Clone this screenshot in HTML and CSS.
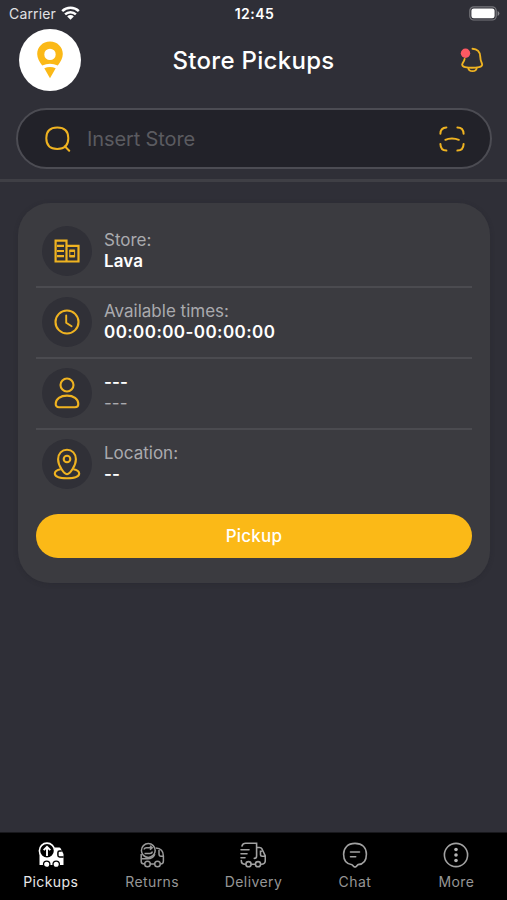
FILE: index.html
```html
<!DOCTYPE html>
<html lang="en">
<head>
<meta charset="utf-8">
<meta name="viewport" content="width=device-width, initial-scale=1">
<title>Store Pickups</title>
<link rel="stylesheet" href="styles.css">
</head>
<body>
<div class="app">
  <div class="status">
    <div class="carrier"><span>Carrier</span>
      <svg width="19" height="14" viewBox="0 0 19 14"><g fill="none" stroke="#fff" stroke-width="2.5"><path d="M1.2 5.1a12 12 0 0 1 16.6 0"/><path d="M4.1 8.3a7.8 7.8 0 0 1 10.8 0"/></g><path d="M9.5 13.8 6.2 10.4a4.7 4.7 0 0 1 6.6 0Z" fill="#fff"/></svg>
    </div>
    <time class="clock">12:45</time>
    <svg class="battery" width="31" height="15" viewBox="0 0 31 15"><rect x=".8" y=".8" width="26.4" height="13.2" rx="4" fill="none" stroke="#77777c" stroke-width="1.2"/><rect x="2.4" y="2.5" width="23.2" height="9.8" rx="2.3" fill="#fff"/><path d="M28.6 5v5q1.8-.8 1.8-2.5T28.6 5Z" fill="#85858a"/></svg>
  </div>
  <header class="header">
    <div class="logo"><svg width="28" height="40" viewBox="0 0 28 40"><path fill="#fbb917" fill-rule="evenodd" d="M14 1.500C6.700 1.500 1.200 7 1.200 14c0 4 2.300 8.200 5 11.500q7.800-3.500 15.600 0C24.500 22.200 26.800 18 26.800 14c0-7-5.500-12.500-12.800-12.500Zm0 7.200a5.700 5.700 0 1 0 0 11.400 5.700 5.700 0 0 0 0-11.400Z"/><path fill="#fbb917" d="M8.300 28.300q5.700-2.600 11.400 0L14 38.300Z"/></svg></div>
    <h1 class="title">Store Pickups</h1>
    <svg class="bell" width="24" height="26" viewBox="0 0 24 26"><g fill="none" stroke="#efb321" stroke-width="1.9" stroke-linecap="round" stroke-linejoin="round"><path d="M12.500 1.700c4.800 0 7.600 3.500 7.700 7.600.1 4.100.5 4.900 1.700 7.200 1 2.100-.7 3.200-2.800 3.600-4.800.9-9.600.9-14 0-2-.4-3.700-1.700-2.600-3.600 1.200-1.900 1.900-2.900 2.100-4.500"/><path d="M8.300 21c.5 4.200 7.900 4.200 8.400 0"/></g><circle cx="5.500" cy="6.300" r="4.700" fill="#fd5963"/></svg>
  </header>
  <div class="search">
    <svg width="26" height="26" viewBox="0 0 26 26" fill="none" stroke="#efb321" stroke-width="2" stroke-linecap="round"><path d="M12.300 1.500c7.300 0 11 3.500 11 10.700s-3.700 10.700-11 10.700-11-3.500-11-10.700 3.700-10.700 11-10.700Z"/><path d="m19.800 20.200 4.400 4.600"/></svg>
    <span class="placeholder">Insert Store</span>
    <svg width="26" height="26" viewBox="0 0 26 26" fill="none" stroke="#efb321" stroke-width="2" stroke-linecap="round"><path d="M1.400 7.800c0-4.200 2.200-6.300 6-6.400M18.400 1.400c3.900 0 6.100 2.200 6.200 6.400M1.400 18c.1 4.200 2.200 6.500 6 6.600M18.400 24.600c3.900-.1 6.100-2.400 6.200-6.600M6.400 13.800c3.500-1.900 9.500-1.900 13.400 0"/></svg>
  </div>
  <main class="content">
    <section class="card">
      <div class="row">
        <div class="disc"><svg width="26" height="26" viewBox="0 0 26 26" fill="none" stroke="#efb321" stroke-width="2.2"><path d="M1.600 2.600h10.900v20.900H1.600ZM3 7.800h7M3 13h7M3 18.200h7M12.500 7.800h12v15.700h-12"/><path d="M15.500 12.700h5.300M15.500 18.200h5.300" stroke-width="2.600"/><path d="M15.800 12v7M20.600 12v7" stroke-width="1"/></svg></div>
        <div class="text"><span class="label">Store:</span><strong class="value">Lava</strong></div>
      </div>
      <div class="row">
        <div class="disc"><svg width="26" height="26" viewBox="0 0 26 26" fill="none" stroke="#efb321" stroke-width="2.1"><circle cx="13" cy="13" r="11.500"/><path d="M12.200 6.500v7.200l5.400 3.500" stroke-width="1.900" stroke-linecap="round"/></svg></div>
        <div class="text"><span class="label">Available times:</span><strong class="value times">00:00:00-00:00:00</strong></div>
      </div>
      <div class="row">
        <div class="disc"><svg width="26" height="32" viewBox="0 0 26 32" fill="none" stroke="#efb321" stroke-width="2.1"><circle cx="13" cy="8" r="6.500"/><path d="M5 30.200c-2.200 0-3.300-1.200-3.300-3.300 0-5.200 4.800-8.300 11.300-8.300s11.300 3.100 11.300 8.300c0 2.100-1.100 3.300-3.300 3.300Z"/></svg></div>
        <div class="text"><strong class="value">---</strong><span class="label">---</span></div>
      </div>
      <div class="row">
        <div class="disc"><svg width="28" height="32" viewBox="0 0 28 32" fill="none" stroke="#efb321" stroke-width="2.1"><path d="M14 26.200c-3-.1-8.900-8.600-8.900-15C5.100 5.500 8.900 1.800 14 1.800s8.900 3.700 8.900 9.400c0 6.400-5.900 14.900-8.900 15Z"/><circle cx="14" cy="11" r="3.300"/><path d="M7.700 21.300C3.800 22 1.800 23.600 1.800 25.600c0 3 5.200 4.700 12.200 4.700s12.200-1.700 12.200-4.700c0-2-2-3.600-5.900-4.300"/></svg></div>
        <div class="text"><span class="label">Location:</span><strong class="value">--</strong></div>
      </div>
      <button class="pickup" type="button">Pickup</button>
    </section>
  </main>
  <nav class="tabs">
    <a class="tab active"><svg width="26" height="26" viewBox="0 0 26 26"><path fill="#fff" d="M1.500 9H16V5.500h5.200q1 0 1.500 1L25.500 12v11h-24Z"/><circle cx="9" cy="8.700" r="7.600" fill="#000" stroke="#fff" stroke-width="1.600"/><path d="M9 14V5M5.700 8.200 9 4.800l3.300 3.400" fill="none" stroke="#fff" stroke-width="1.900"/><path d="M23.800 9h-2.200q-1.700 0-1.700 1.700v2.500q0 1.700 1.700 1.700h4" fill="none" stroke="#000" stroke-width="1.500"/><g fill="#fff" stroke="#000" stroke-width="1.300"><circle cx="8.700" cy="22.300" r="3.200"/><circle cx="18.200" cy="22.300" r="3.200"/></g></svg><span>Pickups</span></a>
    <a class="tab"><svg width="26" height="26" viewBox="0 0 26 26" fill="none" stroke="#9a9a9a" stroke-width="1.500"><circle cx="9.300" cy="8.500" r="6.900"/><path d="M5.200 7.500q0-1.800 2.300-1.800H13M11 3.700l2.200 2L11 7.700M13.200 9.500q0 1.900-2.300 1.900H5.500"/><path d="M2.200 12v7.500q0 2.500 3.200 2.500m6.200 0h3.800m6.200 0q2.800 0 2.800-3v-5q0-7.500-7.700-8M20 8v4q0 2.300 2 2.300h2.400M3 16.800h5.800q5 0 7.100-4.500"/><circle cx="8.500" cy="22" r="2.800"/><circle cx="18.500" cy="22" r="2.800"/></svg><span>Returns</span></a>
    <a class="tab"><svg width="26" height="26" viewBox="0 0 26 26" fill="none" stroke="#a2a2a2" stroke-width="1.600" stroke-linecap="round"><path d="M2 4q.8-2.700 3.600-2.700h11V14q0 2.400-2.300 2.400M1 7.800h8M1 11.800h6M1 15.800h4M1.300 18.500q0 3.800 3.800 3.800m6.400 0h3.800m6.200 0c2.500 0 3.800-1.500 3.800-4v-4.500L22 7q-.8-1.500-2.500-1.500h-2.600M21.500 9.200h-1v3.300q0 1.700 1.700 1.700h3"/><circle cx="8.500" cy="22.200" r="2.600"/><circle cx="18" cy="22.200" r="2.600"/></svg><span>Delivery</span></a>
    <a class="tab"><svg width="26" height="26" viewBox="0 0 26 26" fill="none" stroke="#a2a2a2" stroke-width="1.600" stroke-linecap="round" stroke-linejoin="round"><path d="M13 1.400c7.200 0 11.400 4 11.400 10.900S21 22.400 16 22.600l-1.700 1.800q-1.300 1.200-2.600 0L10 22.700C4.600 22.200 1.600 18.700 1.600 12.300S5.800 1.400 13 1.400ZM8.500 10h9M8.500 14.700h5.200"/></svg><span>Chat</span></a>
    <a class="tab"><svg width="26" height="26" viewBox="0 0 26 26"><circle cx="13" cy="13" r="11.600" fill="none" stroke="#a2a2a2" stroke-width="1.600"/><g fill="#b5b5b5"><circle cx="13" cy="7.500" r="1.800"/><circle cx="13" cy="13" r="1.800"/><circle cx="13" cy="18.500" r="1.800"/></g></svg><span>More</span></a>
  </nav>
</div>
</body>
</html>
```
FILE: styles.css
```css
* { box-sizing: border-box; }
body { margin: 0; background: #2f2f37; font-family: Inter, "Liberation Sans", sans-serif; color: #fff; }
svg { display: block; flex: none; }
.app { display: flex; flex-direction: column; height: 900px; }
.status { display: grid; grid-template-columns: 1fr auto 1fr; align-items: center; height: 28px; padding: 0 7px 0 9px; font-size: 14px; }
.carrier { display: flex; align-items: center; gap: 5px; color: #e1e1e4; letter-spacing: .15px; margin-top: -1px; }
.carrier svg { margin-top: -2px; }
.clock { font-weight: 600; letter-spacing: .5px; margin-top: -1px; }
.battery { justify-self: end; margin-top: -1px; }
.header { display: grid; grid-template-columns: 62px 1fr 62px; align-items: center; height: 63px; padding: 0 19px; }
.logo { display: flex; align-items: center; justify-content: center; width: 62px; height: 62px; border-radius: 50%; background: #fff; }
.title { margin: 2px 0 0; text-align: center; font-size: 24px; line-height: 30px; font-weight: 500; letter-spacing: .3px; }
.bell { justify-self: end; margin: 1px 4px 0 0; }
.search { display: flex; align-items: center; height: 61px; margin: 17px 15px 0 16px; padding: 0 25px 0 27px; border: 2px solid #4c4c53; border-radius: 31px; background: #222229; }
.placeholder { flex: 1; margin-left: 16px; color: #5b5b60; font-size: 20px; line-height: 24px; letter-spacing: -.12px; }
.content { flex: 1; margin-top: 10px; padding: 21px 17px 0 18px; border-top: 3px solid #3f3f45; }
.card { height: 380px; padding: 14px 18px 0; border-radius: 32px; background: #3b3b40; box-shadow: 0 1px 4px #25252c66; }
.row { display: flex; align-items: center; gap: 12px; height: 71px; padding: 0 0 2px 6px; border-bottom: 2px solid #4b4b50; }
.row:nth-child(4) { border-bottom-color: transparent; }
.disc { display: flex; flex: none; align-items: center; justify-content: center; width: 50px; height: 50px; border-radius: 50%; background: #303037; }
.text { display: flex; flex-direction: column; padding-top: 1px; font-size: 17px; line-height: 21px; }
.label { color: #aaaaae; }
.value { color: #fff; font-weight: 600; letter-spacing: .1px; }
.times { letter-spacing: .42px; }
.pickup { display: block; width: 100%; height: 44px; margin-top: 13px; padding: 0; border: 0; border-radius: 22px; background: #fbb917; color: #fff; font: 500 17px/22px Inter, sans-serif; letter-spacing: .2px; }
.tabs { display: grid; grid-template-columns: repeat(5, 1fr); height: 68px; background: #000; border-top: 1px solid #18181c; }
.tab { display: flex; flex-direction: column; align-items: center; gap: 5px; padding-top: 9px; color: #969696; font-size: 14px; line-height: 17px; letter-spacing: .4px; }
.tab.active { color: #e8e8e8; }
```
